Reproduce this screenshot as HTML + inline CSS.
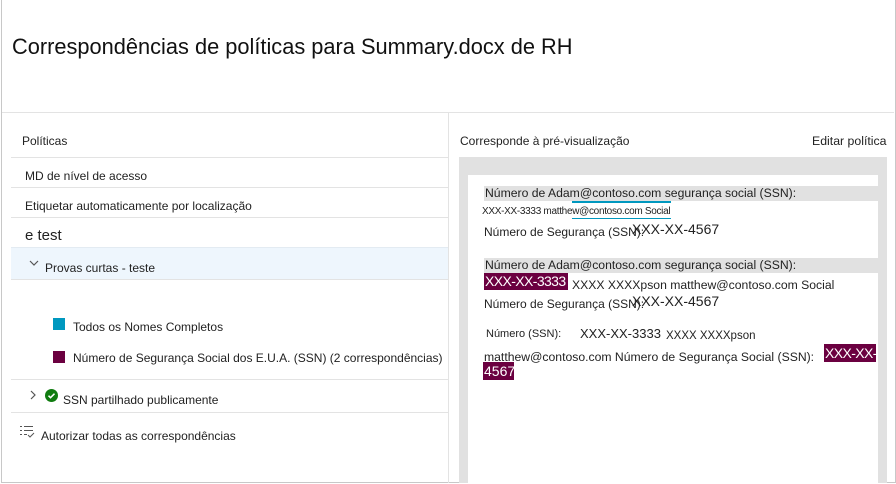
<!DOCTYPE html>
<html><head><meta charset="utf-8"><style>
*{margin:0;padding:0;box-sizing:border-box}
body{width:896px;height:484px;background:#fff;font-family:"Liberation Sans",sans-serif;color:#222;position:relative;overflow:hidden}
.a{position:absolute;white-space:nowrap}
.hl{position:absolute;height:1px;background:#e3e3e3}
.s{font-size:12px;letter-spacing:0}
.p{font-size:12px;letter-spacing:0}
.m{background:#6b0040;color:#fff}
</style></head><body>
<div class="a" style="left:1px;top:0;width:895px;height:483px;border-left:1px solid #c8c8c8;border-right:1px solid #c8c8c8;border-bottom:1px solid #c8c8c8"></div>
<div class="a" style="left:12px;top:34px;font-size:21.8px;color:#111">Correspondências de políticas para Summary.docx de RH</div>
<div class="hl" style="left:2px;top:112px;width:892px"></div>
<div class="a" style="left:448px;top:112px;width:1px;height:371px;background:#e3e3e3"></div>

<div class="a s" style="left:22px;top:134px">Políticas</div>
<div class="hl" style="left:11px;top:157px;width:437px"></div>
<div class="a s" style="left:25px;top:169px">MD de nível de acesso</div>
<div class="hl" style="left:11px;top:187px;width:437px"></div>
<div class="a s" style="left:25px;top:199px">Etiquetar automaticamente por localização</div>
<div class="hl" style="left:11px;top:217px;width:437px"></div>
<div class="a" style="left:25px;top:227px;font-size:15px">e test</div>
<div class="a" style="left:11px;top:247px;width:437px;height:33px;background:#eef6fd;border-top:1px solid #e3ebf2;border-bottom:1px solid #e3e3e3"></div>
<svg class="a" style="left:29px;top:260px" width="10" height="7"><path d="M1 1l4 4 4-4" stroke="#555" fill="none" stroke-width="1.2"/></svg>
<div class="a s" style="left:45px;top:261px">Provas curtas - teste</div>
<div class="a" style="left:53px;top:318px;width:12px;height:12px;background:#0098bf"></div>
<div class="a s" style="left:73px;top:320px">Todos os Nomes Completos</div>
<div class="a" style="left:53px;top:351px;width:12px;height:12px;background:#6b0040"></div>
<div class="a s" style="left:73px;top:351px">Número de Segurança Social dos E.U.A. (SSN) (2 correspondências)</div>
<div class="hl" style="left:11px;top:379px;width:437px"></div>
<svg class="a" style="left:30px;top:390px" width="7" height="10"><path d="M1 1l4 4-4 4" stroke="#555" fill="none" stroke-width="1.2"/></svg>
<svg class="a" style="left:45px;top:389px" width="13" height="13"><circle cx="6.5" cy="6.5" r="6.5" fill="#107c10"/><path d="M3.5 6.7l2 2 4-4" stroke="#fff" fill="none" stroke-width="1.5"/></svg>
<div class="a s" style="left:63px;top:393px">SSN partilhado publicamente</div>
<div class="hl" style="left:11px;top:412px;width:437px"></div>
<svg class="a" style="left:19px;top:425px" width="16" height="14"><g stroke="#555" stroke-width="1" fill="none"><path d="M1 1.5h2M5 1.5h9M1 5.5h2M5 5.5h9M1 9.5h2M5 9.5h3M9 10l2 2 4-4"/></g></svg>
<div class="a s" style="left:41px;top:429px">Autorizar todas as correspondências</div>

<div class="a p" style="left:460px;top:134px">Corresponde à pré-visualização</div>
<div class="a p" style="left:812px;top:134px;font-size:12.3px">Editar política</div>
<div class="a" style="left:459px;top:157px;width:428px;height:326px;background:#e1e1e1"></div>
<div class="a" style="left:468px;top:175px;width:410px;height:308px;background:#fff"></div>
<div class="a" style="left:484px;top:186px;width:394px;height:15px;background:#e1e1e1"></div>
<div class="a" style="left:485px;top:186px;font-size:12.2px">Número de Adam@contoso.com segurança social (SSN):</div>
<div class="a" style="left:572px;top:201px;width:99px;height:2px;background:#0098bf"></div>
<div class="a" style="left:482px;top:206px;font-size:10px;letter-spacing:-0.3px">XXX-XX-3333 matthew@contoso.com Social</div>
<div class="a" style="left:572px;top:218px;width:99px;height:1px;background:#0098bf"></div>
<div class="a" style="left:484px;top:225px;font-size:12px">Número de Segurança (SSN):</div>
<div class="a" style="left:632px;top:221px;font-size:14px">XXX-XX-4567</div>
<div class="a" style="left:484px;top:258px;width:394px;height:15px;background:#e1e1e1"></div>
<div class="a" style="left:485px;top:258px;font-size:12.2px">Número de Adam@contoso.com segurança social (SSN):</div>
<div class="a m" style="left:484px;top:273px;height:17px;width:84px;font-size:14px;line-height:17px;padding-left:1px;letter-spacing:-0.6px;overflow:hidden">XXX-XX-3333</div>
<div class="a" style="left:572px;top:278px;font-size:12.2px">XXXX XXXXpson matthew@contoso.com Social</div>
<div class="a" style="left:484px;top:297px;font-size:12px">Número de Segurança (SSN):</div>
<div class="a" style="left:632px;top:293px;font-size:14px">XXX-XX-4567</div>
<div class="a" style="left:486px;top:328px;font-size:11px">Número (SSN):</div>
<div class="a" style="left:580px;top:326px;font-size:13px">XXX-XX-3333</div>
<div class="a" style="left:666px;top:330px;font-size:11.5px">XXXX XXXXpson</div>
<div class="a" style="left:484px;top:350px;font-size:12.2px">matthew@contoso.com Número de Segurança Social (SSN):</div>
<div class="a m" style="left:824px;top:344px;width:52px;height:18px;font-size:14px;line-height:18px;padding-left:1px;letter-spacing:-0.6px;overflow:hidden">XXX-XX-</div>
<div class="a m" style="left:483px;top:362px;width:31px;height:18px;font-size:14px;line-height:18px;padding-left:1px">4567</div>
</body></html>
